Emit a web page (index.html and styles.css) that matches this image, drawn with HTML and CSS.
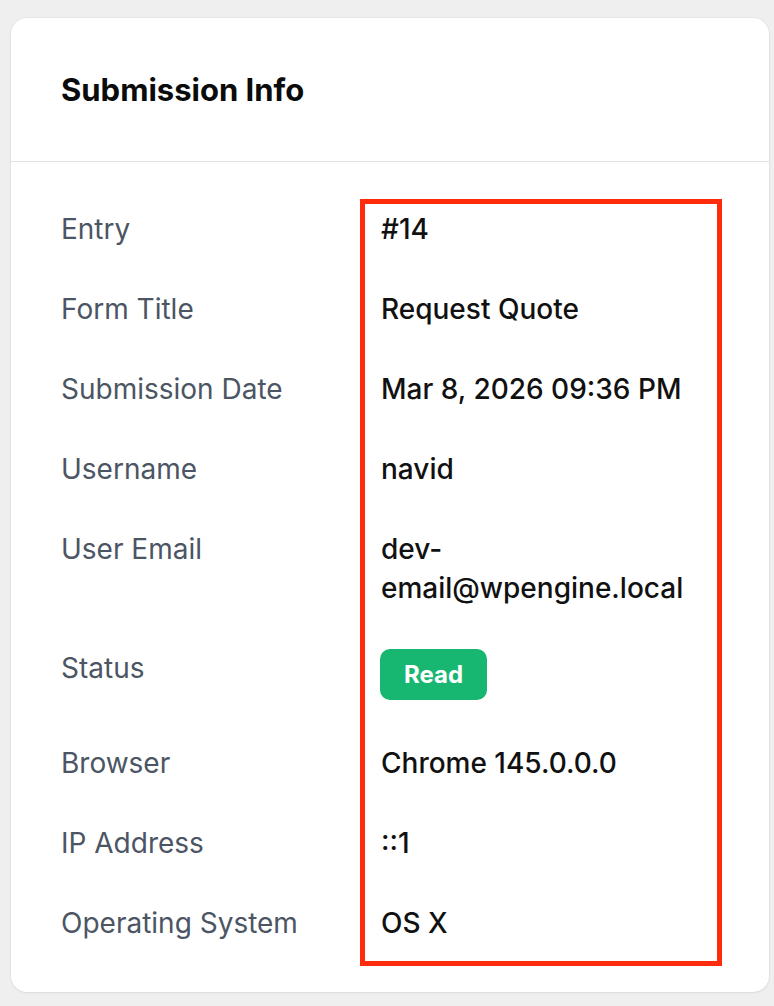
FILE: index.html
```html
<!DOCTYPE html>
<html lang="en">
<head>
    <meta charset="UTF-8">
    <meta name="viewport" content="width=device-width, initial-scale=1.0">
    <title>Submission Info</title>
    <link rel="stylesheet" href="styles.css">
</head>
<body>
    <div class="card">
        <div class="card-head">
            <h2>Submission Info</h2>
        </div>
        <div class="card-body">
            <div class="info">
                <div class="row">
                    <span class="label">Entry</span>
                    <span class="value">#14</span>
                </div>
                <div class="row">
                    <span class="label">Form Title</span>
                    <span class="value">Request Quote</span>
                </div>
                <div class="row">
                    <span class="label">Submission Date</span>
                    <span class="value">Mar 8, 2026 09:36 PM</span>
                </div>
                <div class="row">
                    <span class="label">Username</span>
                    <span class="value">navid</span>
                </div>
                <div class="row">
                    <span class="label">User Email</span>
                    <span class="value">dev-email@wpengine.local</span>
                </div>
                <div class="row row-status">
                    <span class="label">Status</span>
                    <span class="value"><span class="badge">Read</span></span>
                </div>
                <div class="row">
                    <span class="label">Browser</span>
                    <span class="value">Chrome 145.0.0.0</span>
                </div>
                <div class="row">
                    <span class="label">IP Address</span>
                    <span class="value">::1</span>
                </div>
                <div class="row">
                    <span class="label">Operating System</span>
                    <span class="value">OS X</span>
                </div>
                <div class="highlight"></div> <!-- red marker round the values -->
            </div>
        </div>
    </div>
</body>
</html>
```

FILE: styles.css
```css
/* Page */
body {
    margin: 0;
    padding: 18px 5px 14px 11px;
    background-color: #efefef;
    font-family: Inter, "Noto Sans", sans-serif;
    color: #111;
}

.card {
    background-color: #fff;
    border-radius: 16px;
    box-shadow: 0 0 0 1px rgba(0, 0, 0, 0.03), 0 1px 3px rgba(0, 0, 0, 0.06);
}

.card-head {
    padding: 53px 50px 52px;
    border-bottom: 1px solid #e2e2e2;
}

.card-head h2 {
    margin: 0;
    font-size: 31px;
    line-height: 38px;
    font-weight: 700;
    color: #0b0b0b;
}

.card-body {
    padding: 48px 47px 49px 50px;
}

/* Rows */
.info {
    position: relative;
    display: flex;
    flex-direction: column;
    gap: 41px;
}

.row {
    display: flex;
    align-items: flex-start;
}

.row-status {
    padding-bottom: 3px;
}

.label {
    width: 320px;
    flex-shrink: 0;
    font-size: 28px;
    line-height: 39px;
    color: #4b5563;
}

.value {
    flex: 1;
    padding-right: 20px;
    font-size: 28px;
    line-height: 39px;
    font-weight: 500;
    color: #111;
}

.badge {
    display: inline-block;
    margin-left: -1px;
    padding: 0 24px;
    height: 51px;
    line-height: 51px;
    border-radius: 10px;
    background-color: #18b771;
    color: #fff;
    font-size: 24px;
    font-weight: 700;
    vertical-align: top;
}

.highlight {
    position: absolute;
    top: -11px;
    bottom: -23px;
    left: 299px;
    right: 0;
    border: 5px solid #fe2b0c;
    pointer-events: none;
}
```
